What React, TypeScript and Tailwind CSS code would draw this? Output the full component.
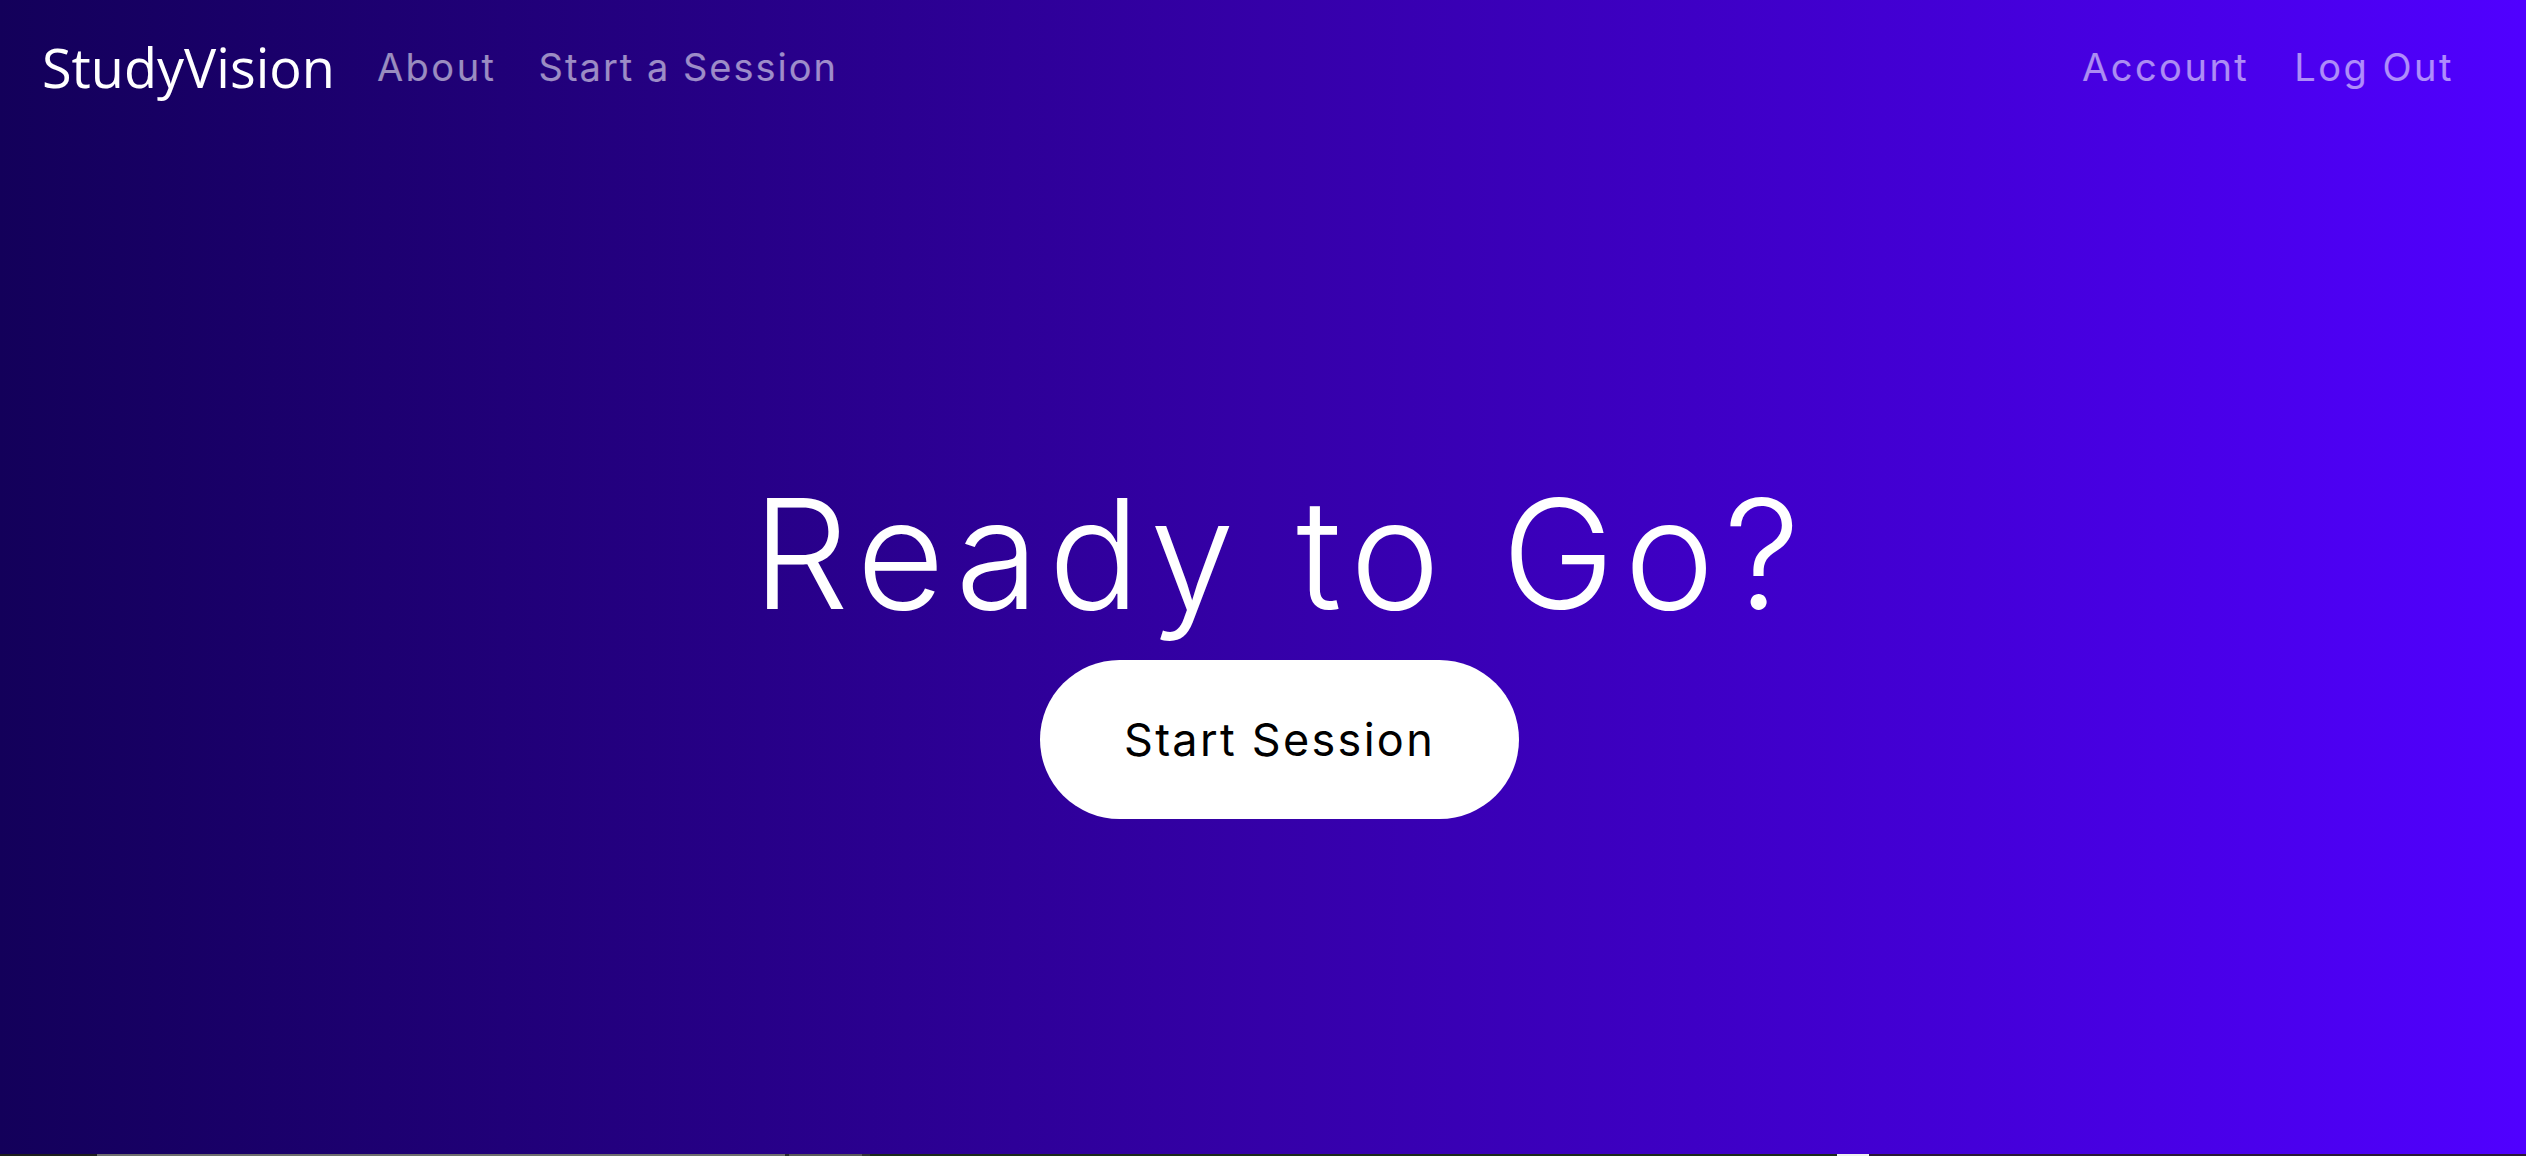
import React from "react";

export default function App() {
  return (
    <div className="w-full h-[1156px] flex flex-col overflow-hidden">
      <div className="h-[1154px] bg-linear-to-r from-[#13005a] via-[#3500a8] to-[#5000ff] flex flex-col">
        <nav className="h-[134px] flex items-center pl-[42px] pr-[72px]">
          <div className="flex items-center gap-[42px]">
            <span className="text-white text-[54px] font-['Open_Sans',sans-serif] leading-none">StudyVision</span>
            <a className="text-white/55 text-[38px] tracking-[2.5px] font-['Inter',sans-serif] leading-none">About</a>
            <a className="text-white/55 text-[38px] tracking-[2px] font-['Inter',sans-serif] leading-none">Start a Session</a>
          </div>
          <div className="ml-auto flex items-center gap-[45px]">
            <a className="text-white/55 text-[38px] tracking-[2.5px] font-['Inter',sans-serif] leading-none">Account</a>
            <a className="text-white/55 text-[38px] tracking-[2.5px] font-['Inter',sans-serif] leading-none">Log Out</a>
          </div>
        </nav>
        <main className="flex-1 flex flex-col items-center pt-[344px]">
          <h1 className="ml-[36px] text-white text-[152px] font-light tracking-[9.5px] leading-none font-['Inter',sans-serif]">
            Ready to Go?
          </h1>
          <button className="ml-[33px] mt-[30px] h-[159px] w-[479px] rounded-full bg-white text-black text-[45px] tracking-[2.3px] font-['Inter',sans-serif] flex items-center justify-center">
            Start Session
          </button>
        </main>
      </div>
      <div className="h-[2px] flex">
        <div className="w-[97px] bg-[#1e1e1e]" />
        <div className="w-[688px] bg-[#6e6e6e]" />
        <div className="w-[4px] bg-[#2a2a2a]" />
        <div className="w-[73px] bg-[#5a5a5a]" />
        <div className="w-[8px] bg-[#333333]" />
        <div className="w-[967px] bg-[#1c2a1c]" />
        <div className="w-[32px] bg-[#f0f0f0]" />
        <div className="flex-1 bg-[#2b1838]" />
      </div>
    </div>
  );
}
